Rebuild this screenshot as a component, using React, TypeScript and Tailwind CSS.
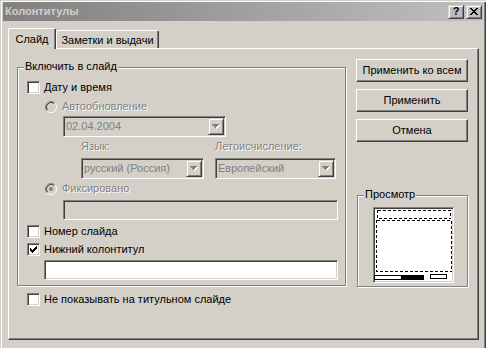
import React from 'react';

const sunken =
    'border border-t-[#808080] border-l-[#808080] border-r-white border-b-white shadow-[inset_1px_1px_0_#404040,inset_-1px_-1px_0_#d4d0c8]';
const raised =
    'border border-t-white border-l-white border-r-[#404040] border-b-[#404040] shadow-[inset_-1px_-1px_0_#808080]';
const raisedSmall =
    'border border-t-[#d4d0c8] border-l-[#d4d0c8] border-r-[#404040] border-b-[#404040] shadow-[inset_1px_1px_0_#fff,inset_-1px_-1px_0_#808080]';
const disabledText = 'text-[#808080] [text-shadow:1px_1px_0_#fff]';

// pixel rows for the little glyphs: [x, y, w]
const checkPixels = [[6, 0, 1], [5, 1, 2], [0, 2, 1], [4, 2, 3], [0, 3, 2], [3, 3, 3], [0, 4, 5], [1, 5, 3], [2, 6, 1]];
const closePixels = [[0, 0, 2], [6, 0, 2], [1, 1, 2], [5, 1, 2], [2, 2, 4], [3, 3, 2], [2, 4, 4], [1, 5, 2], [5, 5, 2], [0, 6, 2], [6, 6, 2]];

function Pixels({ rows, w, h, color }: { rows: number[][]; w: number; h: number; color: string }) {
    return (
        <svg width={w} height={h} viewBox={`0 0 ${w} ${h}`} shapeRendering="crispEdges">
            {rows.map(([x, y, len], i) => (
                <rect key={i} x={x} y={y} width={len} height={1} fill={color} />
            ))}
        </svg>
    );
}

function CheckBox({ checked }: { checked?: boolean }) {
    return (
        <div className={`w-[13px] h-[13px] shrink-0 bg-white ${sunken} flex items-center justify-center`}>
            {checked && <Pixels rows={checkPixels} w={7} h={7} color="#000" />}
        </div>
    );
}

function Radio({ checked }: { checked?: boolean }) {
    return (
        <svg width="12" height="12" viewBox="0 0 12 12" className="shrink-0">
            <circle cx="6" cy="6" r="4.5" fill="#d4d0c8" />
            <path d="M2.11 9.89 A5.5 5.5 0 0 1 9.89 2.11" fill="none" stroke="#808080" strokeWidth="1" />
            <path d="M9.89 2.11 A5.5 5.5 0 0 1 2.11 9.89" fill="none" stroke="#ffffff" strokeWidth="1" />
            <path d="M2.82 9.18 A4.5 4.5 0 0 1 9.18 2.82" fill="none" stroke="#404040" strokeWidth="1" />
            <path d="M9.18 2.82 A4.5 4.5 0 0 1 2.82 9.18" fill="none" stroke="#d4d0c8" strokeWidth="1" />
            {checked && <circle cx="6" cy="6" r="2" fill="#808080" />}
        </svg>
    );
}

function CheckRow({ label, checked }: { label: string; checked?: boolean }) {
    return (
        <div className="flex items-center gap-[4px] h-[13px]">
            <CheckBox checked={checked} />
            <span className="whitespace-nowrap">{label}</span>
        </div>
    );
}

function Combo({ value, className }: { value: string; className: string }) {
    return (
        <div className={`h-[21px] ${sunken} bg-[#d4d0c8] flex items-center ${className}`}>
            <span className="flex-1 pl-[2px] text-[#808080] whitespace-nowrap overflow-hidden">{value}</span>
            <div className={`w-[16px] h-[17px] mr-[1px] ${raisedSmall} flex items-center justify-center`}>
                <svg width="8" height="5" viewBox="0 0 8 5" shapeRendering="crispEdges">
                    <path d="M1 1h7v1h-1v1h-1v1h-1v1h-1v-1h-1v-1h-1v-1h-1z" fill="#fff" />
                    <path d="M0 0h7v1h-1v1h-1v1h-1v1h-1v-1h-1v-1h-1v-1h-1z" fill="#808080" />
                </svg>
            </div>
        </div>
    );
}

function Group({ title, className, children }: { title: string; className: string; children: React.ReactNode }) {
    return (
        <div className={`border border-[#808080] shadow-[1px_1px_0_#fff,inset_1px_1px_0_#fff] ${className}`}>
            <div className="-mt-[8px] ml-[6px] px-[1px] w-fit bg-[#d4d0c8] whitespace-nowrap">{title}</div>
            {children}
        </div>
    );
}

function Button({ label }: { label: string }) {
    return (
        <div className={`w-[112px] h-[23px] ${raised} flex items-center justify-center whitespace-nowrap`}>
            {label}
        </div>
    );
}

export default function App() {
    return (
        <div className="w-[486px] h-[348px] overflow-hidden bg-[#d4d0c8] pt-[2px] pl-[3px] pr-[3px] text-[11px] leading-[13px] text-black font-['Liberation_Sans',Arial,sans-serif] shadow-[inset_1px_1px_0_#d4d0c8,inset_2px_2px_0_#fff,inset_-1px_0_0_#404040,inset_-2px_0_0_#808080]">
            {/* title bar */}
            <div className="h-[19px] flex items-center bg-gradient-to-r from-[#808080] to-[#c0c0c0] pl-[2px] pr-[1px]">
                <span className="flex-1 font-bold text-[#d4d0c8]">Колонтитулы</span>
                <div className="flex gap-[2px]">
                    <div className={`w-[16px] h-[14px] ${raisedSmall} flex items-center justify-center font-bold text-[11px] leading-[11px]`}>
                        ?
                    </div>
                    <div className={`w-[16px] h-[14px] ${raisedSmall} flex items-center justify-center`}>
                        <Pixels rows={closePixels} w={8} h={7} color="#000" />
                    </div>
                </div>
            </div>

            {/* tabs */}
            <div className="mt-[7px] ml-[5px] h-[20px] flex items-end">
                <div className="relative z-10 w-[48px] h-[21px] -mb-px bg-[#d4d0c8] border-t border-l border-r border-t-white border-l-white border-r-[#404040] shadow-[inset_-1px_0_0_#808080] rounded-t-[2px] pt-[4px] text-center">
                    Слайд
                </div>
                <div className="w-[103px] h-[18px] border-t border-l border-r border-t-white border-l-white border-r-[#404040] shadow-[inset_-1px_0_0_#808080] rounded-t-[2px] pt-[3px] text-center whitespace-nowrap">
                    Заметки и выдачи
                </div>
            </div>

            {/* tab panel */}
            <div className={`ml-[5px] w-[471px] h-[292px] ${raised} flex items-start`}>
                <div className="ml-[8px] mt-[18px] w-[329px] shrink-0">
                    <Group title="Включить в слайд" className="w-[329px] pb-[5px]">
                        <div className="mt-[8px] pl-[9px]">
                            <CheckRow label="Дату и время" />
                        </div>
                        <div className="mt-[6px] pl-[27px] flex items-center gap-[5px] h-[13px]">
                            <Radio />
                            <span className={disabledText}>Автообновление</span>
                        </div>
                        <Combo value="02.04.2004" className="mt-[3px] ml-[45px] w-[163px]" />
                        <div className="mt-[3px] ml-[63px] flex gap-[11px]">
                            <div className="w-[123px] flex flex-col gap-[5px]">
                                <span className={disabledText}>Язык:</span>
                                <Combo value="русский (Россия)" className="w-[123px]" />
                            </div>
                            <div className="w-[121px] flex flex-col gap-[5px]">
                                <span className={disabledText}>Летоисчисление:</span>
                                <Combo value="Европейский" className="w-[121px]" />
                            </div>
                        </div>
                        <div className="mt-[3px] pl-[27px] flex items-center gap-[5px] h-[13px]">
                            <Radio checked />
                            <span className={disabledText}>Фиксировано</span>
                        </div>
                        <div className={`mt-[5px] ml-[45px] w-[275px] h-[20px] ${sunken} bg-[#d4d0c8]`} />
                        <div className="mt-[5px] pl-[9px]">
                            <CheckRow label="Номер слайда" />
                        </div>
                        <div className="mt-[5px] pl-[9px]">
                            <CheckRow label="Нижний колонтитул" checked />
                        </div>
                        <div className={`mt-[4px] ml-[26px] w-[294px] h-[20px] ${sunken} bg-white`} />
                    </Group>
                    <div className="mt-[7px] pl-[10px]">
                        <CheckRow label="Не показывать на титульном слайде" />
                    </div>
                </div>

                <div className="ml-[10px] mt-[10px] flex flex-col">
                    <div className="flex flex-col gap-[7px]">
                        <Button label="Применить ко всем" />
                        <Button label="Применить" />
                        <Button label="Отмена" />
                    </div>
                    <Group title="Просмотр" className="mt-[53px] ml-[1px] w-[111px] pb-[3px]">
                        <div className={`mt-[6px] ml-[15px] w-[81px] h-[76px] ${sunken} bg-white`}>
                            <svg width="79" height="74" viewBox="0 0 79 74" shapeRendering="crispEdges">
                                <rect x="3.5" y="2.5" width="73" height="8" fill="none" stroke="#000" strokeDasharray="3 2" />
                                <rect x="2.5" y="12.5" width="75" height="51" fill="none" stroke="#000" strokeDasharray="3 2" />
                                <rect x="0.5" y="67.5" width="27" height="4" fill="#fff" stroke="#000" />
                                <rect x="28" y="67" width="22" height="5" fill="#000" />
                                <rect x="56.5" y="66.5" width="16" height="4" fill="#fff" stroke="#000" />
                            </svg>
                        </div>
                    </Group>
                </div>
            </div>
        </div>
    );
}
